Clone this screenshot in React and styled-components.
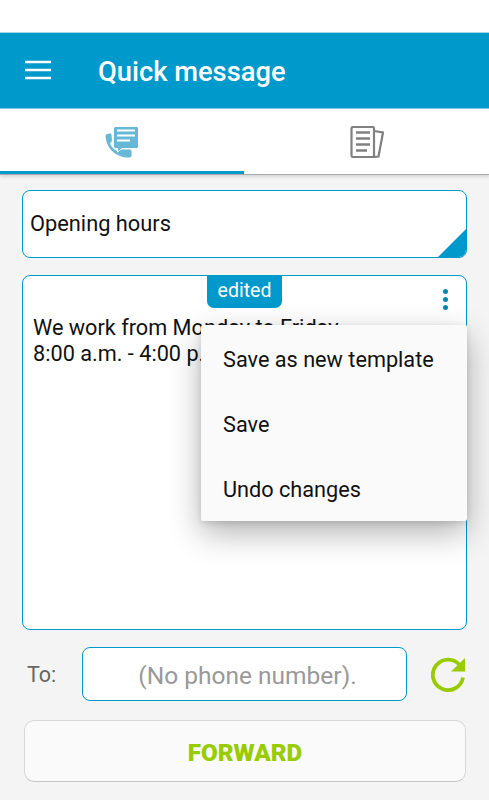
import React from "react";
import styled, { createGlobalStyle } from "styled-components";

const BLUE = "#0099cc";
const GREEN = "#99cc00";

const GlobalStyle = createGlobalStyle`
  html, body {
    margin: 0;
    padding: 0;
    background: #f4f4f4;
    font-family: Roboto, "Liberation Sans", sans-serif;
  }
  * {
    box-sizing: border-box;
  }
`;

const Page = styled.div`
  display: flex;
  flex-direction: column;
  width: 489px;
  height: 800px;
  overflow: hidden;
  background: #f4f4f4;
`;

const StatusBar = styled.div`
  height: 33px;
  background: #fff;
  border-bottom: 1px solid #a9d8ea;
`;

// HEADER

const Header = styled.header`
  display: flex;
  align-items: center;
  height: 76px;
  padding-left: 25px;
  background: ${BLUE};
  border-bottom: 1px solid #7fc6e2;
`;

const MenuIcon = styled.svg`
  width: 26px;
  height: 20px;
  margin-right: 47px;
  margin-top: -1px;
`;

const Title = styled.h1`
  margin: 2px 0 0;
  font-size: 27.3px;
  font-weight: 500;
  line-height: 30px;
  color: #fff;
`;

// TABS

const Tabs = styled.nav`
  display: flex;
  height: 66px;
  background: #fff;
  border-bottom: 1px solid #aaa;
  box-shadow: 0 2px 3px rgba(0, 0, 0, 0.12);
`;

const Tab = styled.div`
  display: flex;
  width: ${p => (p.$active ? "244px" : "245px")};
  align-items: flex-start;
  justify-content: center;
  padding-top: 17px;
  height: 65px;
  border-bottom: ${p => (p.$active ? `3px solid ${BLUE}` : "none")};
`;

const TabIcon = styled.svg`
  width: 34px;
  height: 32px;
`;

// FORM

const Content = styled.main`
  display: flex;
  flex: 1;
  flex-direction: column;
  padding: 15px 22px 0;
`;

const TemplateBox = styled.div`
  position: relative;
  display: flex;
  align-items: center;
  height: 68px;
  padding: 0 7px 2px;
  background: #fff;
  border: 1px solid ${BLUE};
  border-radius: 8px;
  font-size: 21.8px;
  color: #111;
  overflow: hidden;
`;

const Corner = styled.div`
  position: absolute;
  right: -1px;
  bottom: -1px;
  width: 30px;
  height: 30px;
  background: ${BLUE};
  clip-path: polygon(100% 0, 100% 100%, 0 100%);
`;

const MessageBox = styled.div`
  position: relative;
  height: 355px;
  margin-top: 17px;
  padding: 39px 10px 0;
  background: #fff;
  border: 1px solid ${BLUE};
  border-radius: 8px;
  font-size: 21.7px;
  line-height: 26px;
  color: #111;
`;

const Badge = styled.div`
  position: absolute;
  top: -1px;
  left: 184px;
  width: 75px;
  height: 33px;
  background: ${BLUE};
  border-radius: 0 0 7px 7px;
  color: #fff;
  font-size: 19.5px;
  line-height: 31px;
  text-align: center;
`;

const Dots = styled.div`
  position: absolute;
  top: 13px;
  right: 18px;
  display: flex;
  flex-direction: column;
  gap: 3px;
`;

const Dot = styled.span`
  width: 5px;
  height: 5px;
  border-radius: 50%;
  background: #0a85b5;
`;

const PopupMenu = styled.ul`
  position: absolute;
  top: 49px;
  right: -1px;
  width: 266px;
  height: 196px;
  margin: 0;
  padding: 2px 0 0;
  list-style: none;
  background: #fafafa;
  border-radius: 2px;
  box-shadow: 0 12px 32px rgba(0, 0, 0, 0.3), 0 2px 6px rgba(0, 0, 0, 0.12);
`;

const MenuItem = styled.li`
  display: flex;
  align-items: center;
  height: 65px;
  padding-left: 22px;
  font-size: 21.7px;
  color: #111;
`;

const ToRow = styled.div`
  display: flex;
  align-items: center;
  margin-top: 17px;
  height: 54px;
`;

const ToLabel = styled.span`
  width: 60px;
  padding-left: 5px;
  font-size: 21.5px;
  color: #666;
`;

const PhoneField = styled.div`
  display: flex;
  align-items: center;
  justify-content: center;
  width: 325px;
  height: 54px;
  padding: 3px 0 0 6px;
  background: #fff;
  border: 1px solid ${BLUE};
  border-radius: 8px;
  font-size: 24.5px;
  color: #999;
`;

const RefreshIcon = styled.svg`
  width: 36px;
  height: 36px;
  margin-left: 24px;
`;

const ForwardButton = styled.button`
  width: 442px;
  height: 62px;
  margin: 19px 0 0 2px;
  padding: 2px 0 0;
  background: #fafafa;
  border: 1px solid #d8d8d8;
  border-bottom-color: #c4c4c4;
  border-radius: 10px;
  color: ${GREEN};
  font-family: inherit;
  font-size: 24.3px;
  font-weight: 900;
`;

const App = () => {
  return (
    <Page>
      <GlobalStyle />
      <StatusBar />
      <Header>
        <MenuIcon viewBox="0 0 26 20">
          <path d="M0 2h26M0 10h26M0 18h26" stroke="#fff" strokeWidth="2.6" fill="none" />
        </MenuIcon>
        <Title>Quick message</Title>
      </Header>
      <Tabs>
        <Tab $active>
          <TabIcon viewBox="0 0 34 32">
            <path
              d="M1 8.500l4.500-1.200 1 1.200 .5 6.500-2 2.200c1.500 4 4 6.500 8 8.200l2.500-1.800h10l1 1.200v5.500l-1.500 1.200C12.500 32 1.500 24 .5 10z"
              fill="#66b8d6"
            />
            <path
              d="M8.500 2.500a2 2 0 0 1 2-2h21a2 2 0 0 1 2 2v18a2 2 0 0 1-2 2H17l-4.500 3.500v-3.500h-2a2 2 0 0 1-2-2z"
              fill="#66b8d6"
              stroke="#fff"
              strokeWidth="1"
            />
            <path d="M12 4.500h18M12 9.500h18M12 14.500h13" stroke="#fff" strokeWidth="2" fill="none" />
          </TabIcon>
        </Tab>
        <Tab>
          <TabIcon viewBox="0 0 34 32">
            <path
              d="M24 5l9 1.500-4.500 24-5.500 .5M3 1h19.500a1.500 1.500 0 0 1 1.500 1.500v27a1.500 1.500 0 0 1-1.500 1.500H3a1.500 1.500 0 0 1-1.500-1.500v-27A1.500 1.500 0 0 1 3 1z"
              stroke="#808080"
              strokeWidth="2.2"
              fill="none"
            />
            <path d="M6 6.500h14M6 12.500h14M6 18.500h14M6 24.500h11" stroke="#808080" strokeWidth="2.400" fill="none" />
          </TabIcon>
        </Tab>
      </Tabs>
      <Content>
        <TemplateBox>
          Opening hours
          <Corner />
        </TemplateBox>
        <MessageBox>
          We work from Monday to Friday
          <br />
          8:00 a.m. - 4:00 p.m.
          <Badge>edited</Badge>
          <Dots>
            <Dot />
            <Dot />
            <Dot />
          </Dots>
          <PopupMenu>
            <MenuItem>Save as new template</MenuItem>
            <MenuItem>Save</MenuItem>
            <MenuItem>Undo changes</MenuItem>
          </PopupMenu>
        </MessageBox>
        <ToRow>
          <ToLabel>To:</ToLabel>
          <PhoneField>(No phone number).</PhoneField>
          <RefreshIcon viewBox="0 0 36 36">
            <path d="M32 21.500A15.200 15.200 0 1 1 29 9.500" stroke={GREEN} strokeWidth="3.800" fill="none" />
            <path d="M34 2v13.500H20z" fill={GREEN} />
          </RefreshIcon>
        </ToRow>
        <ForwardButton>FORWARD</ForwardButton>
      </Content>
    </Page>
  );
};

export default App;
